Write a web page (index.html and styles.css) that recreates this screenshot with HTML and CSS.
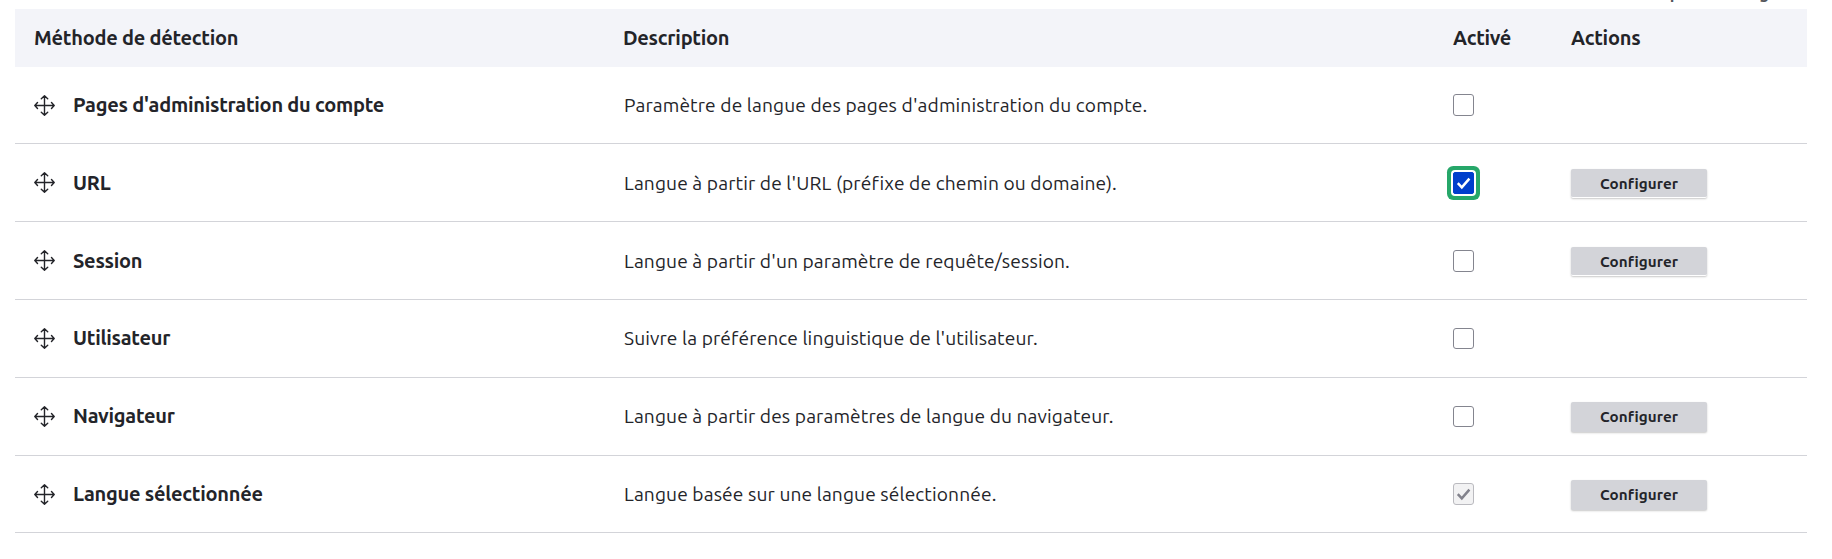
FILE: index.html
```html
<!DOCTYPE html>
<html lang="fr">
<head>
<meta charset="utf-8">
<title>Détection de la langue</title>
<link rel="stylesheet" href="styles.css">
</head>
<body>
<svg class="sprite" aria-hidden="true">
  <symbol id="move" viewBox="0 0 21 21"><path d="M10.5 1v19M1 10.5h19M7.3 3.8l3.2-3 3.2 3M7.3 17.2l3.2 3 3.2-3M3.5 7.6l-2.7 2.9 2.7 2.9M17.5 7.6l2.7 2.9-2.7 2.9"/></symbol>
  <symbol id="check" viewBox="0 0 21 22"><path d="M4.8 11.2l4 4.1 7.6-8.6"/></symbol>
</svg>
<div class="weights"><span>Afficher le poids des lignes</span></div>
<main class="table">
  <div class="row head"><span>Méthode de détection</span><span>Description</span><span>Activé</span><span>Actions</span></div>
  <div class="row short"><div class="name"><svg class="move"><use href="#move"/></svg><b>Pages d'administration du compte</b></div><span class="desc">Paramètre de langue des pages d'administration du compte.</span><i class="box"></i></div>
  <div class="row"><div class="name"><svg class="move"><use href="#move"/></svg><b>URL</b></div><span class="desc">Langue à partir de l'URL (préfixe de chemin ou domaine).</span><i class="box checked"><svg><use href="#check"/></svg></i><button class="lifted">Configurer</button></div>
  <div class="row"><div class="name"><svg class="move"><use href="#move"/></svg><b>Session</b></div><span class="desc">Langue à partir d'un paramètre de requête/session.</span><i class="box"></i><button class="lifted">Configurer</button></div>
  <div class="row high"><div class="name"><svg class="move"><use href="#move"/></svg><b>Utilisateur</b></div><span class="desc">Suivre la préférence linguistique de l'utilisateur.</span><i class="box low"></i></div>
  <div class="row high"><div class="name"><svg class="move"><use href="#move"/></svg><b>Navigateur</b></div><span class="desc">Langue à partir des paramètres de langue du navigateur.</span><i class="box low"></i><button>Configurer</button></div>
  <div class="row short"><div class="name"><svg class="move"><use href="#move"/></svg><b>Langue sélectionnée</b></div><span class="desc">Langue basée sur une langue sélectionnée.</span><i class="box disabled"><svg><use href="#check"/></svg></i><button>Configurer</button></div>
</main>
</body>
</html>
```
FILE: styles.css
```css
* { box-sizing: border-box; }
body { margin: 0; height: 559px; overflow: hidden; background: #fff; color: #232429; font: 19.2px/24px Ubuntu, "Noto Sans", sans-serif; letter-spacing: .11px; }
.sprite { display: none; }
.weights { display: flex; justify-content: flex-end; align-items: flex-end; height: 9px; padding: 0 35px 4px 0; color: #55565b; font-size: 16.8px; font-weight: 700; white-space: nowrap; }
.table { width: 1792px; margin-left: 15px; }
.row { display: grid; grid-template-columns: 589px 830px 118px 1fr; align-items: center; height: 78px; padding-left: 19px; border-bottom: 1px solid #d3d4d9; white-space: nowrap; }
.short { height: 77px; }
.high { padding-bottom: 1px; }
.head { height: 58px; padding-bottom: 1px; border: 0; background: #f3f4f9; font-size: 20px; font-weight: 700; letter-spacing: -.25px; }
.name { display: flex; align-items: center; gap: 19px; }
.name b { margin-left: -1px; font-size: 20px; font-weight: 700; letter-spacing: -.25px; }
.desc { padding-left: 1px; }
.move { width: 21px; height: 21px; fill: none; stroke: #232429; stroke-width: 1.4; stroke-linecap: round; stroke-linejoin: round; }
.box { display: block; width: 21px; height: 22px; border: 1px solid #84858f; border-radius: 3px; background: #fff; }
.low { height: 21px; margin-top: 1px; }
.box svg { display: block; width: 21px; height: 22px; margin: -1px; fill: none; stroke: #fff; stroke-width: 2.5; }
.checked { border-color: #003ecc; border-radius: 2px; background: #003ecc; box-shadow: 0 0 0 2px #fff, 0 0 0 6px #26a769; }
.disabled { border-color: #bababf; background: #f2f2f3; }
.disabled svg { stroke: #82828c; }
button { width: 136px; height: 30px; margin: 1px 0 0; padding: 0; border: 0; border-radius: 2px; background: #d3d4d9; color: #232429; font: 700 15.2px/30px Ubuntu, "Noto Sans", sans-serif; letter-spacing: .08px; box-shadow: 0 1px 2px rgba(0,0,0,.22); }
.lifted { height: 29px; border-bottom: 1px solid #fff; }
```
